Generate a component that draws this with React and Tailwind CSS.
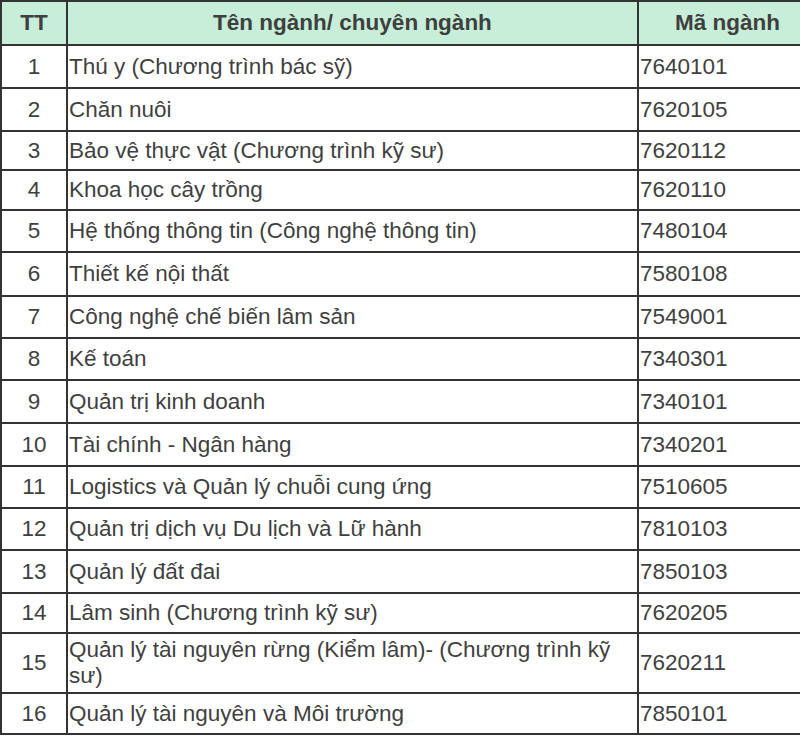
const rows = [
  ["1", "Thú y (Chương trình bác sỹ)", "7640101", "h-[43px]"],
  ["2", "Chăn nuôi", "7620105", "h-[43px]"],
  ["3", "Bảo vệ thực vật (Chương trình kỹ sư)", "7620112", "h-[39px]"],
  ["4", "Khoa học cây trồng", "7620110", "h-[40px]"],
  ["5", "Hệ thống thông tin (Công nghệ thông tin)", "7480104", "h-[42px]"],
  ["6", "Thiết kế nội thất", "7580108", "h-[44px]"],
  ["7", "Công nghệ chế biến lâm sản", "7549001", "h-[42px]"],
  ["8", "Kế toán", "7340301", "h-[42px]"],
  ["9", "Quản trị kinh doanh", "7340101", "h-[43px]"],
  ["10", "Tài chính - Ngân hàng", "7340201", "h-[43px]"],
  ["11", "Logistics và Quản lý chuỗi cung ứng", "7510605", "h-[42px]"],
  ["12", "Quản trị dịch vụ Du lịch và Lữ hành", "7810103", "h-[42px]"],
  ["13", "Quản lý đất đai", "7850103", "h-[43px]"],
  ["14", "Lâm sinh (Chương trình kỹ sư)", "7620205", "h-[40px]"],
  ["15", "Quản lý tài nguyên rừng (Kiểm lâm)- (Chương trình kỹ sư)", "7620211", "h-[60px]"],
  ["16", "Quản lý tài nguyên và Môi trường", "7850101", "h-[41px]"],
];

export default function App() {
  return (
    <div className="w-[800px] h-[736px] bg-white overflow-hidden" style={{ fontFamily: '"Liberation Sans", Arial, sans-serif' }}>
      <table className="w-[800px] table-fixed border-collapse text-[22.5px] text-[#3f3f3f]">
        <colgroup>
          <col className="w-[66px]" />
          <col className="w-[571px]" />
          <col className="w-[163px]" />
        </colgroup>
        <thead>
          <tr className="h-[44px] bg-[#c7eed8]">
            <th className="border-2 border-[#333] font-bold text-center p-0 leading-none">TT</th>
            <th className="border-2 border-[#333] font-bold text-center p-0 leading-none">Tên ngành/ chuyên ngành</th>
            <th className="border-2 border-[#333] font-bold text-center py-0 pl-[16px] pr-0 leading-none">Mã ngành</th>
          </tr>
        </thead>
        <tbody>
          {rows.map((r) => (
            <tr key={r[0]} className={r[3]}>
              <td className="border-2 border-[#333] text-center p-0 leading-[26px]">{r[0]}</td>
              <td className="border-2 border-[#333] text-left py-0 pl-[1px] pr-[20px] leading-[26px]">{r[1]}</td>
              <td className="border-2 border-[#333] text-left py-0 pl-[1px] leading-[26px]">{r[2]}</td>
            </tr>
          ))}
        </tbody>
      </table>
    </div>
  );
}
